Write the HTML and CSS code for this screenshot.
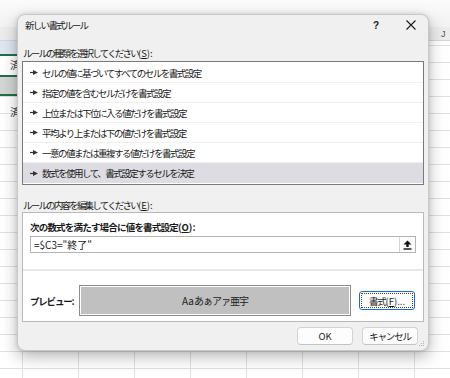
FILE: index.html
```html
<!DOCTYPE html>
<html lang="ja">
<head>
<meta charset="utf-8">
<title>新しい書式ルール</title>
<link rel="stylesheet" href="styles.css">
</head>
<body>
<div class="sheet">
  <div class="sheet-top"></div>
  <div class="sheet-header"><span class="col-j">J</span></div>
  <div class="sheet-grid"></div>
  <div class="sel-block">
    <div class="sel-blue"></div>
    <div class="sel-white"><span class="cell-char">済</span></div>
    <div class="sel-gray"></div>
  </div>
  <span class="cell-char cell-char2">済</span>

  <div class="dialog">
    <div class="titlebar">
      <span class="title">新しい書式ルール</span>
      <span class="help">?</span>
      <svg class="close" width="10" height="10" viewBox="0 0 10 10"><path d="M0.5 0.5 L9.5 9.5 M9.5 0.5 L0.5 9.5" stroke="#1a1a1a" stroke-width="1.1" fill="none"/></svg>
    </div>

    <div class="body">
      <div class="label">ルールの種類を選択してください<span class="a">(<u>S</u>):</span></div>
      <ul class="rules">
        <li><svg class="arr" width="8" height="5" viewBox="0 0 8 5"><path d="M0 2.5 H4" stroke="#333" stroke-width="1.2"/><path d="M3 0 L8 2.5 L3 5 Z" fill="#333"/></svg>セルの値に基づいてすべてのセルを書式設定</li>
        <li><svg class="arr" width="8" height="5" viewBox="0 0 8 5"><path d="M0 2.5 H4" stroke="#333" stroke-width="1.2"/><path d="M3 0 L8 2.5 L3 5 Z" fill="#333"/></svg>指定の値を含むセルだけを書式設定</li>
        <li><svg class="arr" width="8" height="5" viewBox="0 0 8 5"><path d="M0 2.5 H4" stroke="#333" stroke-width="1.2"/><path d="M3 0 L8 2.5 L3 5 Z" fill="#333"/></svg>上位または下位に入る値だけを書式設定</li>
        <li><svg class="arr" width="8" height="5" viewBox="0 0 8 5"><path d="M0 2.5 H4" stroke="#333" stroke-width="1.2"/><path d="M3 0 L8 2.5 L3 5 Z" fill="#333"/></svg>平均より上または下の値だけを書式設定</li>
        <li><svg class="arr" width="8" height="5" viewBox="0 0 8 5"><path d="M0 2.5 H4" stroke="#333" stroke-width="1.2"/><path d="M3 0 L8 2.5 L3 5 Z" fill="#333"/></svg>一意の値または重複する値だけを書式設定</li>
        <li class="selected"><svg class="arr" width="8" height="5" viewBox="0 0 8 5"><path d="M0 2.5 H4" stroke="#333" stroke-width="1.2"/><path d="M3 0 L8 2.5 L3 5 Z" fill="#333"/></svg>数式を使用して、書式設定するセルを決定</li>
      </ul>

      <div class="label label2">ルールの内容を編集してください<span class="a">(<u>E</u>):</span></div>
      <div class="panel">
        <div class="panel-top">
          <div class="bold-label">次の数式を満たす場合に値を書式設定<span class="a">(<u>O</u>):</span></div>
          <div class="formula">
            <span class="formula-text">=$C3="終了"</span>
            <span class="ref-btn"><svg width="9" height="10" viewBox="0 0 9 10"><path d="M4.5 0.5 L8.5 4.5 L5.7 4.5 L5.7 7 L3.3 7 L3.3 4.5 L0.5 4.5 Z" fill="#111"/><rect x="0.5" y="8.3" width="8" height="1.4" fill="#111"/></svg></span>
          </div>
        </div>
        <div class="sep"></div>
        <div class="preview-row">
          <span class="bold-label preview-label">プレビュー:</span>
          <div class="preview-box"><span class="a">Aa</span>あぁアァ亜宇</div>
          <button class="btn btn-format"><span class="focus">書式<span class="a">(<u>F</u>)...</span></span></button>
        </div>
      </div>

      <div class="footer">
        <button class="btn btn-ok"><span class="a">OK</span></button>
        <button class="btn btn-cancel">キャンセル</button>
      </div>
    </div>
    <svg class="grip" width="6" height="6" viewBox="0 0 6 6"><rect x="4" y="0" width="1" height="1" fill="#b0b0b0"/><rect x="2" y="2" width="1" height="1" fill="#b0b0b0"/><rect x="4" y="2" width="1" height="1" fill="#b0b0b0"/><rect x="0" y="4" width="1" height="1" fill="#b0b0b0"/><rect x="2" y="4" width="1" height="1" fill="#b0b0b0"/><rect x="4" y="4" width="1" height="1" fill="#b0b0b0"/></svg>
  </div>
</div>
</body>
</html>
```

FILE: styles.css
```css
* { box-sizing: border-box; }
html, body {
  margin: 0;
  padding: 0;
  width: 450px;
  height: 378px;
  overflow: hidden;
  background: #ffffff;
  font-family: "Noto Sans CJK JP", "Noto Sans", sans-serif;
  color: #1a1a1a;
}
u { text-underline-offset: 1px; }
.a { letter-spacing: 0; }

.sheet {
  position: relative;
  width: 450px;
  height: 378px;
  background: #ffffff;
}
.sheet-top {
  height: 27px;
  background: linear-gradient(#fbfbfb, #f2f2f2);
}
.sheet-header {
  height: 14px;
  background: #ececec;
  border-bottom: 1px solid #d6d6d6;
  position: relative;
}
.col-j {
  position: absolute;
  left: 441px;
  top: 0;
  font-family: "Liberation Sans", sans-serif;
  font-size: 9px;
  line-height: 14px;
  color: #555;
}
.sheet-grid {
  position: absolute;
  left: 0;
  top: 42px;
  width: 450px;
  height: 336px;
  background-image:
    linear-gradient(#e1e1e1 1px, transparent 1px),
    linear-gradient(90deg, #e1e1e1 1px, transparent 1px);
  background-size: 450px 17px, 56px 336px;
  background-position: 0 3px, 22px 0;
}
.sel-block {
  position: absolute;
  left: 0;
  top: 41px;
  width: 120px;
  display: flex;
  flex-direction: column;
}
.sel-blue {
  height: 15px;
  background: #dde7f2;
  border-bottom: 2px solid #1e7145;
}
.sel-white {
  height: 21px;
  background: #ffffff;
  border-bottom: 2px solid #1e7145;
  position: relative;
}
.sel-gray {
  height: 19px;
  background: #d4d4d4;
  border-bottom: 2px solid #1e7145;
}
.cell-char {
  position: absolute;
  left: 10px;
  top: 3px;
  font-size: 10px;
  line-height: 12px;
  color: #444;
}
.cell-char2 { top: 106px; }

.dialog {
  position: absolute;
  left: 17px;
  top: 14px;
  width: 412px;
  height: 337px;
  background: #f0f0f0;
  border: 1px solid #c9c9c9;
  border-radius: 8px;
  box-shadow: 0 6px 16px rgba(0,0,0,0.28), 0 0 4px rgba(0,0,0,0.12);
  font-size: 9.5px;
  letter-spacing: -1.5px;
}
.titlebar {
  height: 31px;
  display: flex;
  align-items: flex-start;
  padding: 3px 0 0 7px;
  line-height: 14px;
}
.title { flex: 1; letter-spacing: -1.7px; }
.help {
  font-family: "Liberation Sans", sans-serif;
  font-weight: bold;
  font-size: 10px;
  letter-spacing: 0;
  margin-right: 27px;
  line-height: 15px;
}
.close { margin: 2px 12px 0 0; }

.body {
  padding: 0 4px;
}
.label {
  height: 15px;
  line-height: 14px;
  padding-left: 1px;
  letter-spacing: -1.8px;
}
.label2 { margin-top: 13px; height: 14px; }

.rules {
  list-style: none;
  margin: 0;
  padding: 1px 0 1px;
  background: #ffffff;
  border: 1px solid #7a7a7a;
}
.rules li {
  height: 20px;
  display: flex;
  align-items: center;
  padding-left: 7px;
  border-bottom: 1px solid #f0f0f0;
  line-height: 14px;
  white-space: nowrap;
}
.rules li:last-child { border-bottom: none; }
.rules li.selected { background: #dcdce2; }
.arr { margin-right: 4px; flex: none; }

.panel {
  background: #ffffff;
  border: 1px solid #b9b9b9;
  height: 110px;
  display: flex;
  flex-direction: column;
}
.panel-top { padding: 7px 7px 0 7px; }
.bold-label {
  font-weight: bold;
  line-height: 14px;
  letter-spacing: -0.8px;
  white-space: nowrap;
}
.formula {
  margin-top: 2px;
  height: 17px;
  border: 1px solid #b4b4b4;
  display: flex;
  align-items: center;
  background: #ffffff;
}
.formula-text {
  flex: 1;
  padding-left: 3px;
  font-size: 10px;
  letter-spacing: 0;
  line-height: 14px;
}
.ref-btn {
  width: 16px;
  height: 15px;
  border-left: 1px solid #d4d4d4;
  display: flex;
  align-items: center;
  justify-content: center;
  background: #fcfcfc;
}
.sep {
  margin-top: 16px;
  height: 2px;
  background: #e8e8e8;
}
.preview-row {
  margin-top: 14px;
  display: flex;
  align-items: center;
  padding: 0 8px 0 7px;
}
.preview-label {
  width: 49px;
  flex: none;
  letter-spacing: -1.2px;
}
.preview-box {
  width: 272px;
  height: 31px;
  background: #c0c0c0;
  border: 1px solid #8c8c8c;
  box-shadow: inset 0 0 0 1px #ffffff;
  display: flex;
  align-items: center;
  justify-content: center;
  font-size: 10px;
  letter-spacing: -1px;
  color: #222;
}
.btn {
  font-family: inherit;
  font-size: 9.5px;
  letter-spacing: -1.2px;
  color: #1a1a1a;
  background: #fdfdfd;
  border: 1px solid #d3d3d3;
  border-bottom-color: #c2c2c2;
  border-radius: 4px;
  padding: 0;
  line-height: 14px;
}
.btn-format {
  margin-left: 8px;
  width: 56px;
  height: 19px;
  border: 1px solid #1a6fc4;
  border-radius: 3px;
  padding: 1px;
  display: flex;
}
.focus {
  flex: 1;
  border: 1px dotted #444;
  display: flex;
  align-items: center;
  justify-content: center;
}
.footer {
  margin-top: 5px;
  display: flex;
  justify-content: flex-end;
  gap: 9px;
  padding-right: 6px;
}
.btn-ok, .btn-cancel {
  width: 56px;
  height: 18px;
}
.grip {
  position: absolute;
  right: 3px;
  bottom: 3px;
}
```
